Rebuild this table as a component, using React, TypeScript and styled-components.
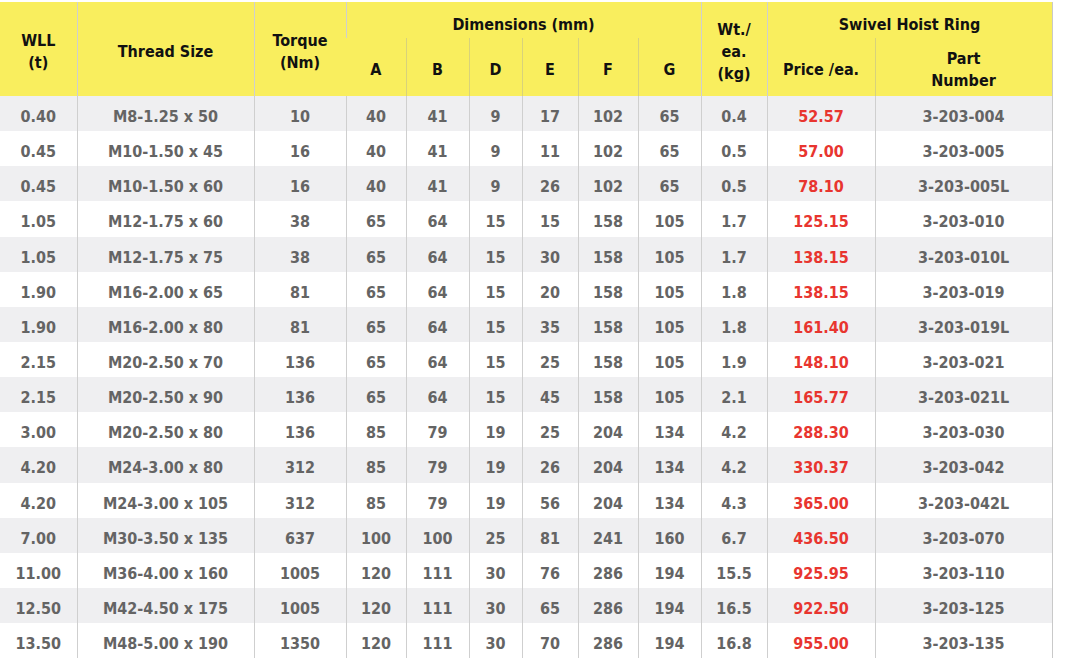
import React from 'react';
import styled, { createGlobalStyle } from 'styled-components';

const GlobalStyle = createGlobalStyle`
  html, body {
    margin: 0;
    padding: 0;
    background: #ffffff;
  }
  body {
    font-family: "DejaVu Sans Condensed", "DejaVu Sans", sans-serif;
  }
`;

const Page = styled.div`
  padding-top: 2px;
  width: 1052px;
`;

const Table = styled.table`
  width: 1052px;
  border-collapse: collapse;
  table-layout: fixed;
  border-right: 1px solid #c9c9c9;
`;

const Col = styled.col<{ $w: number }>`
  width: ${({ $w }) => $w}px;
`;

// header text sits a little low in its cell, hence the top padding
const HeadCell = styled.th<{ $h?: number; $sub?: boolean; $pt?: number }>`
  background: #f9ee5e;
  color: #111111;
  font-size: 16px;
  font-weight: bold;
  line-height: 22px;
  text-align: center;
  vertical-align: middle;
  padding: ${({ $pt }) => $pt ?? 6}px 0 0;
  height: ${({ $h }) => ($h ? `${$h}px` : 'auto')};
  border-left: 1px solid ${({ $sub }) => ($sub ? '#d8d27a' : '#cfcfcf')};
  &:first-child {
    border-left: none;
  }
`;

const Row = styled.tr<{ $shade: boolean }>`
  height: 35.15px;
  background: ${({ $shade }) => ($shade ? '#efeff1' : '#ffffff')};
`;

const Cell = styled.td<{ $price?: boolean }>`
  padding: 6px 0 0;
  text-align: center;
  vertical-align: middle;
  font-size: 16px;
  font-weight: bold;
  color: ${({ $price }) => ($price ? '#e8352f' : '#646464')};
  border-left: 1px solid #cfcfcf;
  &:first-child {
    border-left: none;
  }
`;

type Item = [string, string, string, string, string, string, string, string, string, string, string, string];

const rows: Item[] = [
  ['0.40', 'M8-1.25 x 50', '10', '40', '41', '9', '17', '102', '65', '0.4', '52.57', '3-203-004'],
  ['0.45', 'M10-1.50 x 45', '16', '40', '41', '9', '11', '102', '65', '0.5', '57.00', '3-203-005'],
  ['0.45', 'M10-1.50 x 60', '16', '40', '41', '9', '26', '102', '65', '0.5', '78.10', '3-203-005L'],
  ['1.05', 'M12-1.75 x 60', '38', '65', '64', '15', '15', '158', '105', '1.7', '125.15', '3-203-010'],
  ['1.05', 'M12-1.75 x 75', '38', '65', '64', '15', '30', '158', '105', '1.7', '138.15', '3-203-010L'],
  ['1.90', 'M16-2.00 x 65', '81', '65', '64', '15', '20', '158', '105', '1.8', '138.15', '3-203-019'],
  ['1.90', 'M16-2.00 x 80', '81', '65', '64', '15', '35', '158', '105', '1.8', '161.40', '3-203-019L'],
  ['2.15', 'M20-2.50 x 70', '136', '65', '64', '15', '25', '158', '105', '1.9', '148.10', '3-203-021'],
  ['2.15', 'M20-2.50 x 90', '136', '65', '64', '15', '45', '158', '105', '2.1', '165.77', '3-203-021L'],
  ['3.00', 'M20-2.50 x 80', '136', '85', '79', '19', '25', '204', '134', '4.2', '288.30', '3-203-030'],
  ['4.20', 'M24-3.00 x 80', '312', '85', '79', '19', '26', '204', '134', '4.2', '330.37', '3-203-042'],
  ['4.20', 'M24-3.00 x 105', '312', '85', '79', '19', '56', '204', '134', '4.3', '365.00', '3-203-042L'],
  ['7.00', 'M30-3.50 x 135', '637', '100', '100', '25', '81', '241', '160', '6.7', '436.50', '3-203-070'],
  ['11.00', 'M36-4.00 x 160', '1005', '120', '111', '30', '76', '286', '194', '15.5', '925.95', '3-203-110'],
  ['12.50', 'M42-4.50 x 175', '1005', '120', '111', '30', '65', '286', '194', '16.5', '922.50', '3-203-125'],
  ['13.50', 'M48-5.00 x 190', '1350', '120', '111', '30', '70', '286', '194', '16.8', '955.00', '3-203-135'],
];

const widths = [77, 177, 92, 60, 63, 53, 56, 60, 63, 66, 108, 177];

export default function App() {
  return (
    <>
      <GlobalStyle />
      <Page>
        <Table>
          <colgroup>
            {widths.map((w, i) => (
              <Col key={i} $w={w} />
            ))}
          </colgroup>
          <thead>
            <tr>
              <HeadCell rowSpan={2}>
                WLL
                <br />
                (t)
              </HeadCell>
              <HeadCell rowSpan={2}>Thread Size</HeadCell>
              <HeadCell rowSpan={2}>
                Torque
                <br />
                (Nm)
              </HeadCell>
              <HeadCell colSpan={6} $h={26} $pt={10}>
                Dimensions (mm)
              </HeadCell>
              <HeadCell rowSpan={2}>
                Wt./
                <br />
                ea.
                <br />
                (kg)
              </HeadCell>
              <HeadCell colSpan={2} $h={26} $pt={10}>
                Swivel Hoist Ring
              </HeadCell>
            </tr>
            <tr>
              {['A', 'B', 'D', 'E', 'F', 'G'].map((l, i) => (
                <HeadCell key={l} $h={52} $sub={i > 0}>
                  {l}
                </HeadCell>
              ))}
              <HeadCell $h={52}>Price /ea.</HeadCell>
              <HeadCell $h={52} $sub>
                Part
                <br />
                Number
              </HeadCell>
            </tr>
          </thead>
          <tbody>
            {rows.map((r, i) => (
              <Row key={i} $shade={i % 2 === 0}>
                {r.map((v, j) => (
                  <Cell key={j} $price={j === 10}>
                    {v}
                  </Cell>
                ))}
              </Row>
            ))}
          </tbody>
        </Table>
      </Page>
    </>
  );
}
